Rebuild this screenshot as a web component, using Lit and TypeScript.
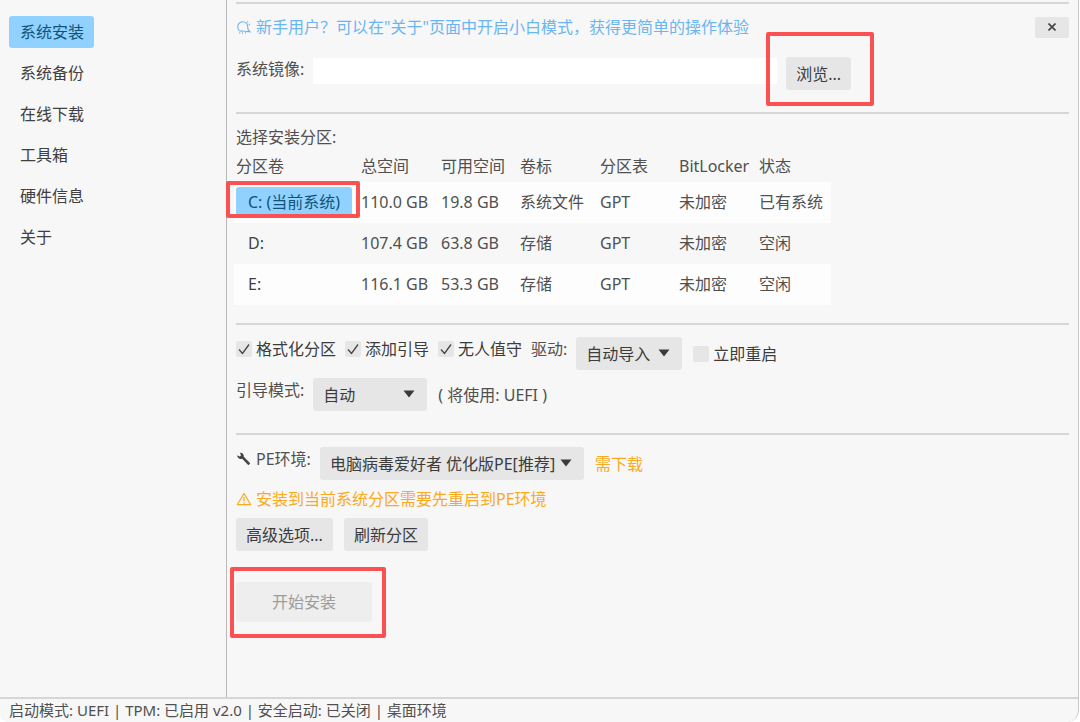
import { LitElement, html, css, svg } from "lit";
import { customElement, property, state } from "lit/decorators.js";

interface Volume {
  name: string;
  total: string;
  free: string;
  label: string;
  scheme: string;
  bitlocker: string;
  status: string;
}

const NAV = ["系统安装", "系统备份", "在线下载", "工具箱", "硬件信息", "关于"];

const VOLUMES: Volume[] = [
  { name: "C: (当前系统)", total: "110.0 GB", free: "19.8 GB", label: "系统文件", scheme: "GPT", bitlocker: "未加密", status: "已有系统" },
  { name: "D:", total: "107.4 GB", free: "63.8 GB", label: "存储", scheme: "GPT", bitlocker: "未加密", status: "空闲" },
  { name: "E:", total: "116.1 GB", free: "53.3 GB", label: "存储", scheme: "GPT", bitlocker: "未加密", status: "空闲" },
];

const caret = svg`<svg class="caret" viewBox="0 0 12 8" aria-hidden="true"><path d="M0.5 0.5h11L6 7.5z" fill="#3a3a3a"/></svg>`;

@customElement("check-option")
export class CheckOption extends LitElement {
  @property() label = "";
  @property({ type: Boolean }) checked = false;

  static styles = css`
    :host {
      display: block;
    }
    .option {
      display: flex;
      align-items: center;
      gap: 4px;
      line-height: 24px;
      color: #3c3c3c;
      white-space: nowrap;
    }
    .box {
      display: grid;
      width: 16px;
      height: 16px;
    }
    .input,
    .tick {
      grid-area: 1 / 1;
      width: 16px;
      height: 16px;
      margin: 0;
    }
    .input {
      appearance: none;
      border-radius: 2px;
      background: #e6e6e6;
    }
    .tick {
      pointer-events: none;
      visibility: hidden;
    }
    .input:checked + .tick {
      visibility: visible;
    }
  `;

  private toggle(e: Event) {
    this.checked = (e.target as HTMLInputElement).checked;
  }

  render() {
    return html`<label class="option">
      <span class="box">
        <input class="input" type="checkbox" .checked=${this.checked} @change=${this.toggle} />
        <svg class="tick" viewBox="0 0 16 16" aria-hidden="true">
          <path d="M3 8.5L6.5 12.5L13 3.5" fill="none" stroke="#444" stroke-width="1.3" />
        </svg>
      </span>
      <span>${this.label}</span>
    </label>`;
  }
}

@customElement("app-root")
export class AppRoot extends LitElement {
  @state() private page = 0;
  @state() private selected = 0;

  static styles = css`
    :host {
      display: block;
      font-family: "Noto Sans", "Noto Sans CJK SC", sans-serif;
      font-size: 16px;
      line-height: 24px;
      color: #505050;
      background: #fff;
    }
    * {
      box-sizing: border-box;
    }
    button,
    select,
    input {
      font: inherit;
      border: 0;
      margin: 0;
    }
    .window {
      display: flex;
      flex-direction: column;
      min-height: 100vh;
      margin-right: 1px;
      background: #f7f7f7;
      border-right: 1px solid #c8c8c8;
      border-radius: 0 0 12px 8px;
    }
    .body {
      flex: 1;
      display: flex;
    }
    .nav {
      flex: none;
      width: 227px;
      padding: 16px 9px;
      display: flex;
      flex-direction: column;
      align-items: flex-start;
      gap: 9px;
      border-right: 1px solid #b9b9b9;
    }
    .nav-item {
      height: 32px;
      padding: 0 10px 0 11px;
      border-radius: 3px;
      background: none;
      color: #404040;
      line-height: 33px;
    }
    .nav-item.active {
      background: #90d1ff;
      color: #0f5478;
    }
    .main {
      flex: 1;
      min-width: 0;
      padding: 2px 9px 24px;
    }
    .rule {
      height: 2px;
      margin: 0;
      border: 0;
      background: #d6d6d6;
    }
    .row {
      display: flex;
      align-items: flex-start;
      gap: 9px;
      white-space: nowrap;
    }
    .tip {
      align-items: center;
      justify-content: space-between;
      padding-top: 11px;
      color: #6bb5f2;
    }
    .iconed {
      display: flex;
      align-items: center;
      gap: 4px;
    }
    .icon {
      flex: none;
      width: 16px;
      height: 16px;
    }
    .close {
      display: grid;
      place-items: center;
      width: 34px;
      height: 21px;
      padding: 0;
      border-radius: 2px;
      background: #e6e6e6;
    }
    .cross {
      width: 8px;
      height: 8px;
    }
    .image {
      padding: 18px 0 22px;
    }
    .path {
      width: 464px;
      height: 26px;
      margin-top: 1px;
      padding: 0 6px;
      border-radius: 2px;
      background: #fff;
      outline: none;
    }
    .btn {
      height: 33px;
      padding: 0 10px;
      border-radius: 3px;
      background: #e6e6e6;
      color: #3c3c3c;
      white-space: nowrap;
    }
    .mark {
      position: relative;
      display: inline-block;
    }
    .mark::after {
      content: "";
      position: absolute;
      border: 4px solid #fa5252;
      border-radius: 2px;
      pointer-events: none;
    }
    .mark-browse::after {
      inset: -25px -23px -16px -20px;
    }
    .mark-volume::after {
      inset: -6px -8px 0 -10px;
    }
    .mark-start::after {
      inset: -15px -14px -16px -6px;
    }
    .caption {
      margin: 0;
      padding-top: 11px;
    }
    .volumes {
      width: 597px;
      margin: 5px 0 18px -2px;
      border-collapse: collapse;
      table-layout: fixed;
      text-align: left;
      white-space: nowrap;
    }
    .volumes th,
    .volumes td {
      padding: 0;
      font-weight: 400;
    }
    .volumes th {
      height: 28px;
      padding-bottom: 4px;
    }
    .volumes td {
      height: 41px;
      line-height: 31px;
      vertical-align: middle;
    }
    .volumes th:first-child,
    .volumes td:first-child {
      padding-left: 2px;
    }
    .volumes tbody tr:nth-child(odd) {
      background: #fdfdfd;
    }
    .w-name {
      width: 127px;
    }
    .w-wide {
      width: 80px;
    }
    .w-narrow {
      width: 79px;
    }
    .volume {
      display: block;
      height: 31px;
      padding: 0 12px;
      border-radius: 3px;
      background: none;
      color: #404040;
    }
    .volume.active {
      background: #90d1ff;
      color: #0f5478;
    }
    .options {
      padding-top: 12px;
    }
    .center {
      display: flex;
      align-items: center;
      gap: 11px;
    }
    .boot {
      padding: 8px 0 22px;
    }
    .picker {
      position: relative;
      display: block;
    }
    .select {
      appearance: none;
      display: block;
      width: 100%;
      height: 33px;
      padding: 0 24px 0 10px;
      border-radius: 3px;
      background: #e6e6e6;
      color: #3c3c3c;
    }
    .caret {
      position: absolute;
      right: 12px;
      top: 12px;
      width: 12px;
      height: 8px;
      pointer-events: none;
    }
    .p-driver {
      width: 106px;
    }
    .p-boot {
      width: 114px;
    }
    .p-pe {
      width: 264px;
    }
    .pe {
      padding-top: 12px;
    }
    .warn {
      color: #fba91f;
    }
    .notice {
      padding: 7px 0;
    }
    .actions {
      gap: 11px;
    }
    .launch {
      padding-top: 31px;
    }
    .start {
      width: 136px;
      height: 40px;
      background: #eeeeee;
      color: #9c9c9c;
    }
    .status {
      padding: 0 9px;
      border-top: 2px solid #d6d6d6;
      font-size: 15px;
      line-height: 23px;
      white-space: nowrap;
    }
  `;

  private picker(id: string, cls: string, options: string[]) {
    return html`<span class="picker ${cls}">
      <select class="select" id=${id}>
        ${options.map((o) => html`<option>${o}</option>`)}
      </select>
      ${caret}
    </span>`;
  }

  private volumeRow(v: Volume, i: number) {
    const active = this.selected === i;
    const button = html`<button class="volume ${active ? "active" : ""}" @click=${() => (this.selected = i)}>${v.name}</button>`;
    return html`<tr>
      <td>${i === 0 ? html`<div class="mark mark-volume">${button}</div>` : button}</td>
      <td>${v.total}</td>
      <td>${v.free}</td>
      <td>${v.label}</td>
      <td>${v.scheme}</td>
      <td>${v.bitlocker}</td>
      <td>${v.status}</td>
    </tr>`;
  }

  render() {
    return html`<div class="window">
      <div class="body">
        <nav class="nav">
          ${NAV.map(
            (name, i) =>
              html`<button class="nav-item ${this.page === i ? "active" : ""}" @click=${() => (this.page = i)}>${name}</button>`
          )}
        </nav>
        <main class="main">
          <hr class="rule" />
          <div class="row tip">
            <span class="iconed">
              <svg class="icon" viewBox="0 0 16 16" fill="none" stroke="currentColor" stroke-width="1.1" aria-hidden="true">
                <path d="M3.200 11.600C1.400 9.800 1.200 6.400 3 4.400C5 2.200 8.400 2.200 10.400 4.200C12.200 6 11.600 8.600 12 10.400L14 12.800L8.800 12.200C6.600 11.600 5 12.800 3.200 11.600z" />
                <path d="M3.600 13.200v1.400M6.200 13.400l.4 1.400M9 13.400l1 .8M11 2.600l1.200.8M13 4.800l.6 1.400" />
              </svg>
              <span>新手用户？可以在"关于"页面中开启小白模式，获得更简单的操作体验</span>
            </span>
            <button class="close" aria-label="关闭">
              <svg class="cross" viewBox="0 0 8 8" aria-hidden="true">
                <path d="M0.500 0.500L7.500 7.500M7.500 0.500L0.500 7.500" stroke="#444" stroke-width="1.600" />
              </svg>
            </button>
          </div>
          <div class="row image">
            <label for="image">系统镜像:</label>
            <input class="path" id="image" type="text" />
            <span class="mark mark-browse"><button class="btn">浏览...</button></span>
          </div>
          <hr class="rule" />
          <p class="caption">选择安装分区:</p>
          <table class="volumes">
            <thead>
              <tr>
                <th class="w-name">分区卷</th>
                <th class="w-wide">总空间</th>
                <th class="w-narrow">可用空间</th>
                <th class="w-wide">卷标</th>
                <th class="w-narrow">分区表</th>
                <th class="w-wide">BitLocker</th>
                <th>状态</th>
              </tr>
            </thead>
            <tbody>
              ${VOLUMES.map((v, i) => this.volumeRow(v, i))}
            </tbody>
          </table>
          <hr class="rule" />
          <div class="row options">
            <check-option label="格式化分区" checked></check-option>
            <check-option label="添加引导" checked></check-option>
            <check-option label="无人值守" checked></check-option>
            <label for="driver">驱动:</label>
            <div class="center">
              ${this.picker("driver", "p-driver", ["自动导入"])}
              <check-option label="立即重启"></check-option>
            </div>
          </div>
          <div class="row boot">
            <label for="boot">引导模式:</label>
            <div class="center">
              ${this.picker("boot", "p-boot", ["自动"])}
              <span>( 将使用: UEFI )</span>
            </div>
          </div>
          <hr class="rule" />
          <div class="row pe">
            <label class="iconed" for="pe">
              <svg class="icon" viewBox="0 0 16 16" aria-hidden="true">
                <path d="M1.200 4.200L3.600 5.600L5 4.400L4 1.800C6.200 1.400 8.200 3.200 7.800 5.800L14.200 12.200L12.400 14.200L6.200 7.800C3.800 8.600 1.200 7 1.200 4.200z" fill="#444" />
              </svg>
              <span>PE环境:</span>
            </label>
            <div class="center">
              ${this.picker("pe", "p-pe", ["电脑病毒爱好者 优化版PE[推荐]"])}
              <span class="warn">需下载</span>
            </div>
          </div>
          <div class="iconed notice warn">
            <svg class="icon" viewBox="0 0 16 16" fill="none" stroke="currentColor" aria-hidden="true">
              <path d="M8 2.500L14.700 13.700H1.300z" stroke-width="1.200" stroke-linejoin="round" />
              <path d="M8 6v4.200M8 11.200v1.300" stroke-width="1.300" />
            </svg>
            <span>安装到当前系统分区需要先重启到PE环境</span>
          </div>
          <div class="row actions">
            <button class="btn">高级选项...</button>
            <button class="btn">刷新分区</button>
          </div>
          <div class="launch">
            <span class="mark mark-start"><button class="btn start" disabled>开始安装</button></span>
          </div>
        </main>
      </div>
      <footer class="status">启动模式: UEFI | TPM: 已启用 v2.0 | 安全启动: 已关闭 | 桌面环境</footer>
    </div>`;
  }
}
